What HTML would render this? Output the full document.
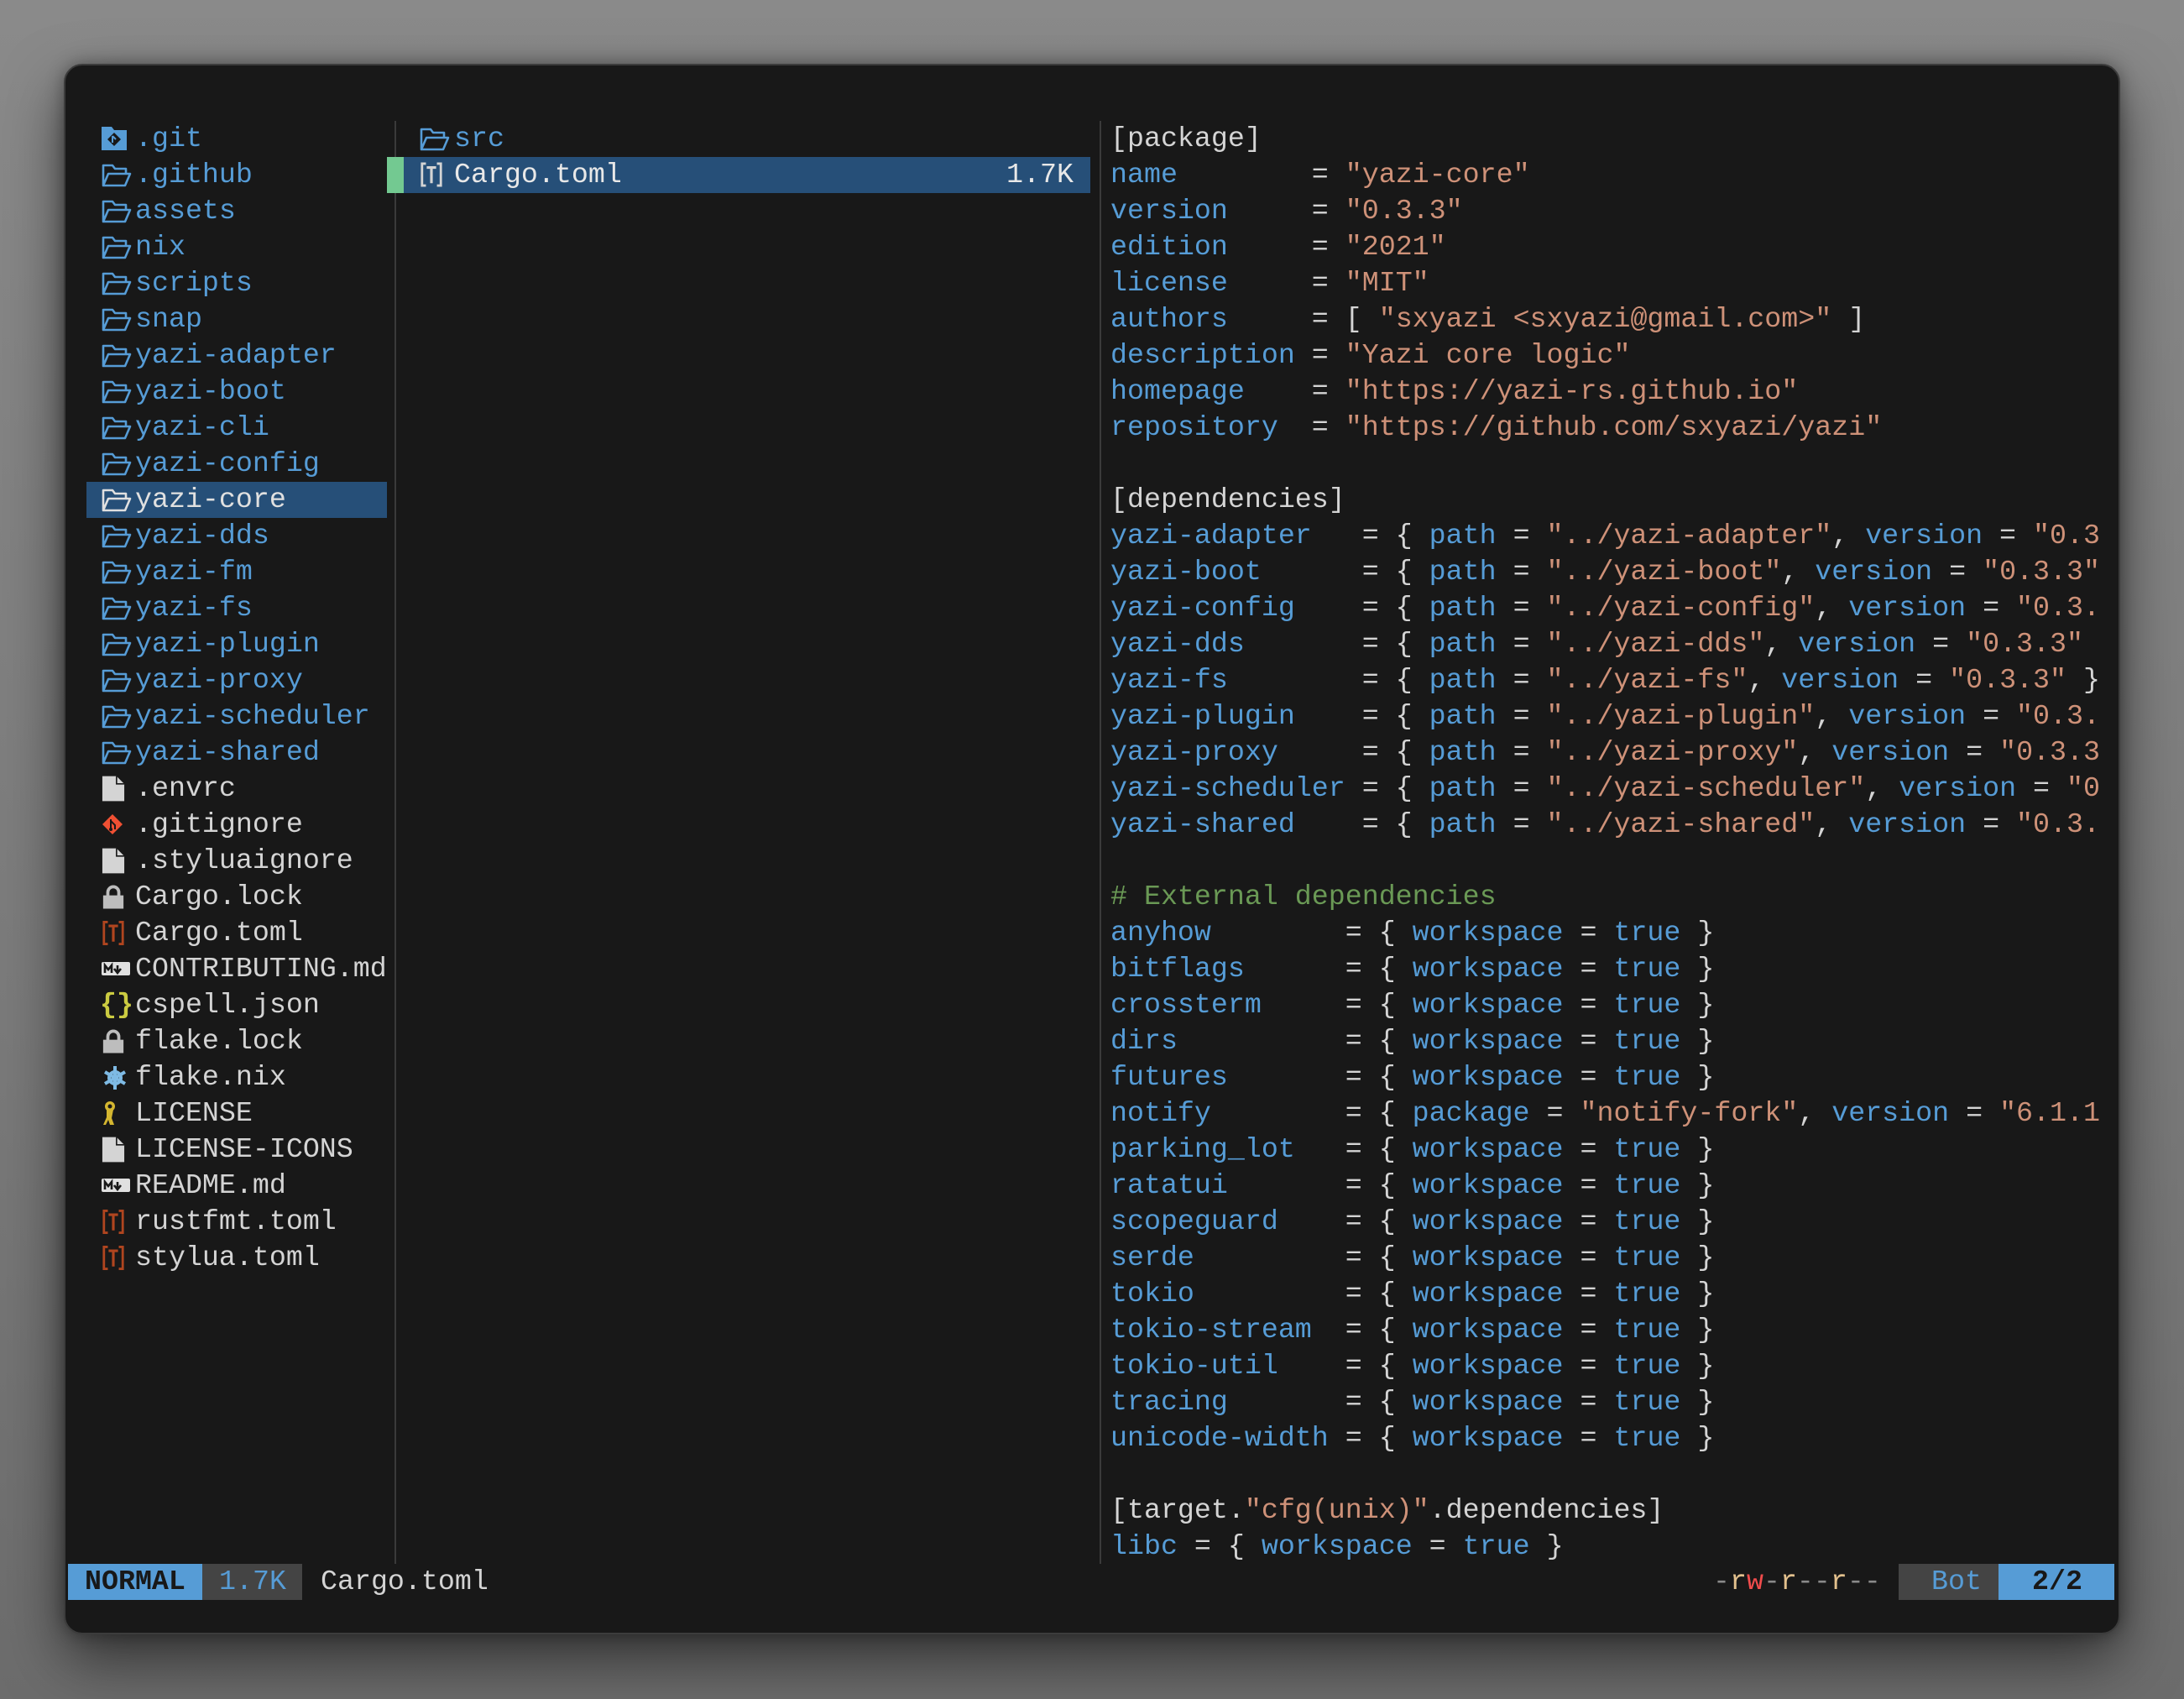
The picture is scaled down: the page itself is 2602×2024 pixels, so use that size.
<!DOCTYPE html>
<html><head><meta charset="utf-8"><style>
*{margin:0;padding:0;box-sizing:border-box}
html,body{width:2602px;height:2024px;overflow:hidden}
body{background:linear-gradient(#8a8a8a,#7a7a7a 60%,#6c6c6c);position:relative;font-family:"Liberation Mono",monospace;font-size:33.3px;color:#d4d4d4}
.win{position:absolute;left:76px;top:76px;width:2450px;height:1871px;background:#181818;border-radius:22px;border:2px solid #3c3c3c;box-shadow:0 30px 70px rgba(0,0,0,.55),0 0 20px rgba(0,0,0,.35)}
.r{position:absolute;height:43px;line-height:43px;white-space:pre}
.b{color:#569cd6}.s{color:#ce9178}.c{color:#6a9955}.w{color:#d4d4d4}
svg{position:absolute}
.div{position:absolute;width:2px;background:#3a3a3a}
</style></head><body>
<div class="win"></div>
<div class="div" style="left:470px;top:144px;height:1719px"></div>
<div class="div" style="left:1310px;top:144px;height:1719px"></div>
<div style="position:absolute;left:103px;top:574px;width:358px;height:43px;background:#264f78"></div>
<div style="position:absolute;left:461px;top:187px;width:20px;height:43px;background:#73c991"></div>
<div style="position:absolute;left:481px;top:187px;width:818px;height:43px;background:#264f78"></div>

<svg width="0" height="0" style="position:absolute"><defs>
<symbol id="fold" viewBox="0 0 36 30"><path d="M2 27V3h11l3 4h13v6M2 27l6-14h26l-6 14z" fill="none" stroke="currentColor" stroke-width="2.6" stroke-linejoin="round"/></symbol>
<symbol id="file" viewBox="0 0 30 34"><path d="M1 1h18l10 10v22H1z" fill="currentColor"/><path d="M19 1v10h10" fill="#181818" stroke="#181818" stroke-width="1.5"/><path d="M20 2l8 8h-8z" fill="currentColor"/></symbol>
<symbol id="toml" viewBox="0 0 30 34"><path d="M8 3H3v28h5M22 3h5v28h-5" fill="none" stroke="currentColor" stroke-width="3"/><path d="M9 8h12M15 8v20" fill="none" stroke="currentColor" stroke-width="3.4"/></symbol>
<symbol id="lock" viewBox="0 0 30 34"><path d="M8 16v-5a7 7 0 0 1 14 0v5" fill="none" stroke="currentColor" stroke-width="4"/><rect x="2" y="15" width="26" height="17" fill="currentColor"/></symbol>
<symbol id="md" viewBox="0 0 34 20"><rect x="0" y="2" width="34" height="16" rx="2" fill="currentColor"/><path d="M4 15V6l4 5 4-5v9M19 6v8M15 10l4 5 4-5" fill="none" stroke="#181818" stroke-width="2.6"/></symbol>
</defs></svg>

<div style="color:#569cd6">
<svg style="left:121px;top:151px" width="30" height="28" viewBox="0 0 30 28"><path d="M0 0h12l3 4h15v24H0z" fill="#569cd6"/><path d="M15 7l8 8-8 8-8-8z" fill="#181818"/><path d="M13 11v8M13 11l4 4" stroke="#569cd6" stroke-width="2"/></svg>
<div class="r" style="left:161px;top:144px">.git</div>
</div>
<div id="L"></div>

<svg style="left:500px;top:151px;color:#569cd6" width="36" height="30"><use href="#fold"/></svg>
<div class="r b" style="left:541px;top:144px">src</div>
<svg style="left:500px;top:191px;color:#d4d4d4" width="28" height="34"><use href="#toml"/></svg>
<div class="r" style="left:541px;top:187px;color:#e8e8e8">Cargo.toml</div>
<div class="r" style="left:1199px;top:187px;color:#e8e8e8">1.7K</div>

<div style="position:absolute;left:1323px;top:144px;width:1179px;height:1720px;overflow:hidden">
<div class="r" style="top:0px">[package]</div>
<div class="r" style="top:43px"><span class="b">name</span>        = <span class="s">"yazi-core"</span></div>
<div class="r" style="top:86px"><span class="b">version</span>     = <span class="s">"0.3.3"</span></div>
<div class="r" style="top:129px"><span class="b">edition</span>     = <span class="s">"2021"</span></div>
<div class="r" style="top:172px"><span class="b">license</span>     = <span class="s">"MIT"</span></div>
<div class="r" style="top:215px"><span class="b">authors</span>     = [ <span class="s">"sxyazi &lt;sxyazi@gmail.com&gt;"</span> ]</div>
<div class="r" style="top:258px"><span class="b">description</span> = <span class="s">"Yazi core logic"</span></div>
<div class="r" style="top:301px"><span class="b">homepage</span>    = <span class="s">"https://yazi-rs.github.io"</span></div>
<div class="r" style="top:344px"><span class="b">repository</span>  = <span class="s">"https://github.com/sxyazi/yazi"</span></div>
<div class="r" style="top:430px">[dependencies]</div>
<div class="r" style="top:473px"><span class="b">yazi-adapter</span>   = { <span class="b">path</span> = <span class="s">"../yazi-adapter"</span>, <span class="b">version</span> = <span class="s">"0.3</span></div>
<div class="r" style="top:516px"><span class="b">yazi-boot</span>      = { <span class="b">path</span> = <span class="s">"../yazi-boot"</span>, <span class="b">version</span> = <span class="s">"0.3.3"</span></div>
<div class="r" style="top:559px"><span class="b">yazi-config</span>    = { <span class="b">path</span> = <span class="s">"../yazi-config"</span>, <span class="b">version</span> = <span class="s">"0.3.</span></div>
<div class="r" style="top:602px"><span class="b">yazi-dds</span>       = { <span class="b">path</span> = <span class="s">"../yazi-dds"</span>, <span class="b">version</span> = <span class="s">"0.3.3"</span></div>
<div class="r" style="top:645px"><span class="b">yazi-fs</span>        = { <span class="b">path</span> = <span class="s">"../yazi-fs"</span>, <span class="b">version</span> = <span class="s">"0.3.3"</span> }</div>
<div class="r" style="top:688px"><span class="b">yazi-plugin</span>    = { <span class="b">path</span> = <span class="s">"../yazi-plugin"</span>, <span class="b">version</span> = <span class="s">"0.3.</span></div>
<div class="r" style="top:731px"><span class="b">yazi-proxy</span>     = { <span class="b">path</span> = <span class="s">"../yazi-proxy"</span>, <span class="b">version</span> = <span class="s">"0.3.3</span></div>
<div class="r" style="top:774px"><span class="b">yazi-scheduler</span> = { <span class="b">path</span> = <span class="s">"../yazi-scheduler"</span>, <span class="b">version</span> = <span class="s">"0</span></div>
<div class="r" style="top:817px"><span class="b">yazi-shared</span>    = { <span class="b">path</span> = <span class="s">"../yazi-shared"</span>, <span class="b">version</span> = <span class="s">"0.3.</span></div>
<div class="r c" style="top:903px"># External dependencies</div>
<div id="R"></div>
<div class="r" style="top:1634px">[target.<span class="s">"cfg(unix)"</span>.dependencies]</div>
<div class="r" style="top:1677px"><span class="b">libc</span> = { <span class="b">workspace</span> = <span class="b">true</span> }</div>
</div>

<div style="position:absolute;left:81px;top:1863px;width:160px;height:43px;background:#569cd6"></div>
<div class="r" style="left:101px;top:1863px;color:#181818;font-weight:bold">NORMAL</div>
<div style="position:absolute;left:241px;top:1863px;width:119px;height:43px;background:#444"></div>
<div class="r b" style="left:261px;top:1863px">1.7K</div>
<div class="r" style="left:382px;top:1863px">Cargo.toml</div>
<div class="r" style="left:2041px;top:1863px;color:#8a8a8a">-<span style="color:#e2c08d">r</span><span style="color:#f14c4c">w</span>-<span style="color:#e2c08d">r</span>--<span style="color:#e2c08d">r</span>--</div>
<div style="position:absolute;left:2262px;top:1863px;width:119px;height:43px;background:#444"></div>
<div class="r b" style="left:2301px;top:1863px">Bot</div>
<div style="position:absolute;left:2381px;top:1863px;width:138px;height:43px;background:#569cd6"></div>
<div class="r" style="left:2421px;top:1863px;color:#181818;font-weight:bold">2/2</div>

<script>
var dirs=[".github","assets","nix","scripts","snap","yazi-adapter","yazi-boot","yazi-cli","yazi-config","yazi-core","yazi-dds","yazi-fm","yazi-fs","yazi-plugin","yazi-proxy","yazi-scheduler","yazi-shared"];
var h="";
dirs.forEach(function(d,i){var t=144+43*(i+1);var sel=d=="yazi-core";var col=sel?"#e0e0e0":"#569cd6";
h+='<svg style="left:121px;top:'+(t+7)+'px;color:'+col+'" width="36" height="30"><use href="#fold"/></svg><div class="r" style="left:161px;top:'+t+'px;color:'+col+'">'+d+'</div>';});
var files=[["file",".envrc","#d4d4d4"],["git",".gitignore",""],["file",".styluaignore","#d4d4d4"],["lock","Cargo.lock","#bdbdbd"],["toml","Cargo.toml","#b0451f"],["md","CONTRIBUTING.md","#e0e0e0"],["json","cspell.json",""],["lock","flake.lock","#bdbdbd"],["nix","flake.nix",""],["key","LICENSE",""],["file","LICENSE-ICONS","#d4d4d4"],["md","README.md","#e0e0e0"],["toml","rustfmt.toml","#b0451f"],["toml","stylua.toml","#b0451f"]];
files.forEach(function(f,i){var t=144+43*(18+i);var ic="";
if(f[0]=="file"||f[0]=="lock"||f[0]=="toml")ic='<svg style="left:121px;top:'+(t+5)+'px;color:'+f[2]+'" width="28" height="33"><use href="#'+f[0]+'"/></svg>';
else if(f[0]=="md")ic='<svg style="left:121px;top:'+(t+10)+'px;color:'+f[2]+'" width="34" height="22"><use href="#md"/></svg>';
else if(f[0]=="git")ic='<svg style="left:121px;top:'+(t+8)+'px" width="26" height="26" viewBox="0 0 26 26"><path d="M13 1l12 12-12 12L1 13z" fill="#f05033"/><path d="M11 7v12M11 9l5 5v5" stroke="#181818" stroke-width="2" fill="none"/><circle cx="11" cy="19" r="2" fill="#181818"/></svg>';
else if(f[0]=="json")ic='<div class="r" style="left:119px;top:'+t+'px;color:#cbcb41;font-weight:bold">{}</div>';
else if(f[0]=="nix")ic='<svg style="left:121px;top:'+(t+6)+'px" width="32" height="32" viewBox="0 0 32 32"><g stroke="#7ebae4" stroke-width="4" fill="none"><path d="M16 2v28M4 9l24 14M4 23l24-14"/><circle cx="16" cy="16" r="7"/></g></svg>';
else if(f[0]=="key")ic='<svg style="left:121px;top:'+(t+6)+'px" width="24" height="32" viewBox="0 0 24 32"><g fill="#d4b630"><circle cx="10" cy="7" r="6"/><path d="M6 11h8l-2 10 3 8h-5l-2-6-3 6H2l4-9z"/></g><circle cx="10" cy="7" r="2.5" fill="#181818"/></svg>';
h+=ic+'<div class="r" style="left:161px;top:'+t+'px;color:#d4d4d4">'+f[1]+'</div>';});
document.getElementById("L").outerHTML=h;
var ws=["anyhow","bitflags","crossterm","dirs","futures","notify","parking_lot","ratatui","scopeguard","serde","tokio","tokio-stream","tokio-util","tracing","unicode-width"];
var r="";
ws.forEach(function(k,i){var t=946+43*i;var pad=" ".repeat(14-k.length);var rest=k=="notify"?'{ <span class="b">package</span> = <span class="s">"notify-fork"</span>, <span class="b">version</span> = <span class="s">"6.1.1</span>':'{ <span class="b">workspace</span> = <span class="b">true</span> }';
r+='<div class="r" style="top:'+t+'px"><span class="b">'+k+'</span>'+pad+'= '+rest+'</div>';});
document.getElementById("R").outerHTML=r;
</script>
</body></html>
